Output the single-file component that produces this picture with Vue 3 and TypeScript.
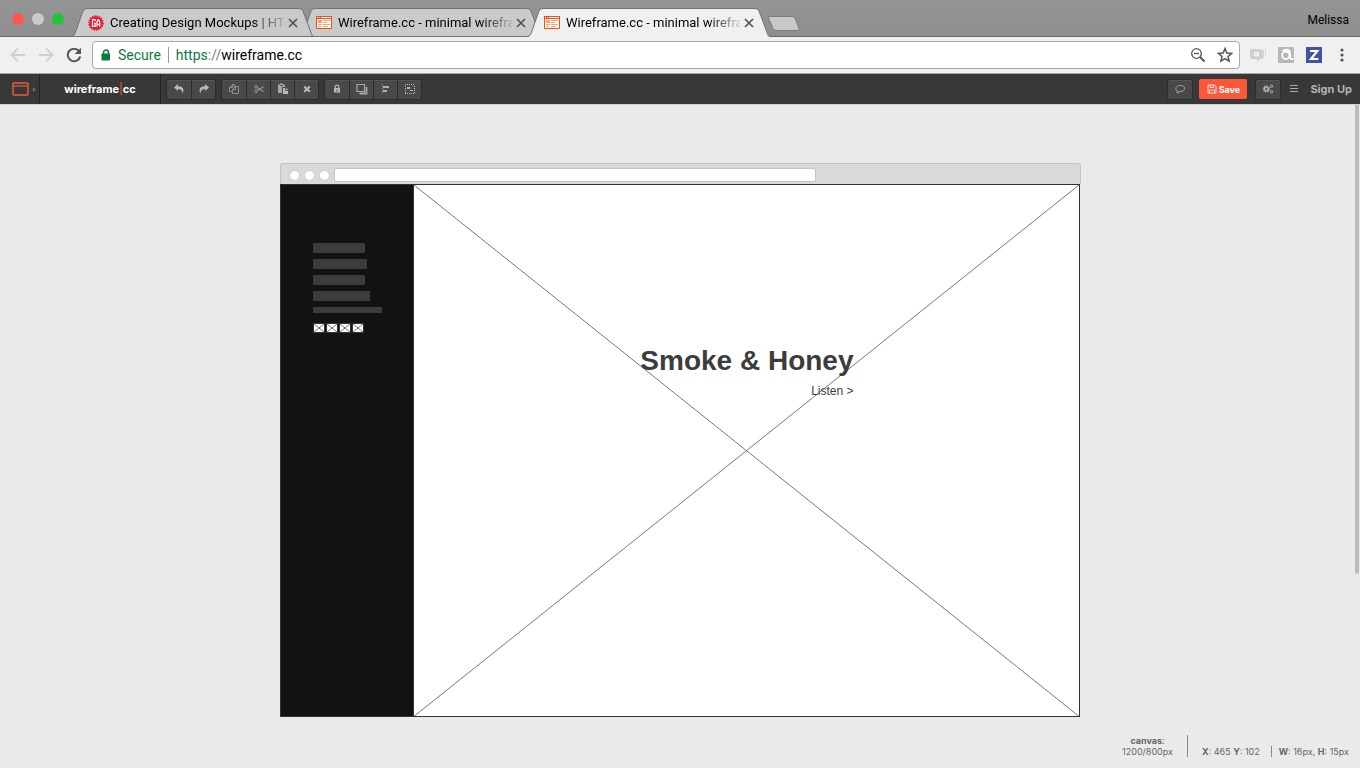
<script setup lang="ts">
import { ref } from 'vue'

interface Tab {
  id: number
  title: string
  icon: 'ga' | 'wire'
}

const tabs: Tab[] = [
  { id: 1, title: 'Creating Design Mockups | HTML', icon: 'ga' },
  { id: 2, title: 'Wireframe.cc - minimal wireframing', icon: 'wire' },
  { id: 3, title: 'Wireframe.cc - minimal wireframing', icon: 'wire' },
]
const active = ref(3)
const address = ref('wireframe.cc')
const groups: string[][] = [
  ['Undo', 'Redo'],
  ['Copy', 'Cut', 'Paste', 'Delete'],
  ['Lock', 'Order', 'Align', 'Group'],
]
const navBars = ['bar-a', 'bar-b', 'bar-a', 'bar-c', 'bar-d']
</script>

<template>
  <div class="window">
    <header class="tabstrip">
      <div class="lights">
        <button class="light red" aria-label="Close window"></button>
        <button class="light grey" aria-label="Minimise window"></button>
        <button class="light green" aria-label="Zoom window"></button>
      </div>
      <nav class="tabs" aria-label="Tabs">
        <div v-for="tab in tabs" :key="tab.id" class="tab" :class="['tab-' + tab.id, { active: tab.id === active }]">
          <svg class="tab-shape" viewBox="0 0 242 29" preserveAspectRatio="none" aria-hidden="true">
            <path class="fill" d="M0 29 L2 27.5 L11 3 Q12 .5 15 .5 H227 Q230 .5 231 3 L240 27 L242 29Z" />
            <path class="edge" d="M0 28.5 Q2 28 3 25.500 L11 3 Q12 .5 15 .5 H227 Q230 .5 231 3 L239.500 26 Q240 28.500 242 28.500" />
            <path v-if="tab.id !== active" class="edge" d="M0 28.500H242" />
          </svg>
          <svg v-if="tab.icon === 'ga'" class="favicon" viewBox="0 0 16 16" aria-hidden="true">
            <circle cx="8" cy="8" r="6.700" fill="#ee1436" />
            <circle cx="8" cy="8" r="7" fill="none" stroke="#ee1436" stroke-width="1.600" stroke-dasharray="1.400 1" />
            <path d="M7.200 6.300V4.700H4.500V11.300H7.200V8.300H6M9 11.800V7L10 4.700H10.500L11.700 7V11.800M9 9.300H11.700" fill="none" stroke="#fff" stroke-width="1.200" />
          </svg>
          <svg v-else class="favicon" viewBox="0 0 16 16" aria-hidden="true">
            <path d="M.5 1.500H15.500V13.500H.5Z" fill="#fff" />
            <path d="M0 1H16V4H0Z" fill="#ff4a0c" />
            <path d="M.5 1.500V13.500H15.500V1.500" fill="none" stroke="#ff4a0c" />
            <path d="M1 2.500H2M3 2.500H4M5 2.500H15" stroke="#fff" />
            <path d="M2 5H6V8H2ZM7 5H14V6H7ZM7 7H11V8H7ZM2 9H6V10H2ZM7 9H14V10H7ZM2 11H5V12H2ZM7 11H12V12H7Z" fill="#ff9c72" />
          </svg>
          <button class="tab-title" @click="active = tab.id">{{ tab.title }}</button>
          <button class="tab-close" :aria-label="'Close ' + tab.title">
            <svg viewBox="0 0 10 10"><path d="M1 1 9 9M9 1 1 9" fill="none" stroke="#525252" stroke-width="1.700" /></svg>
          </button>
        </div>
      </nav>
      <button class="new-tab" aria-label="New tab">
        <svg viewBox="0 0 34 18"><path d="M3 1.500H25Q27 1.500 28 3L32 13.500Q32.500 15.500 31 15.500H9Q7 15.500 6 13.500L1.500 3Q1 1.500 3 1.500Z" fill="#c9c9c9" stroke="#7b7b7b" /></svg>
      </button>
      <span class="profile">Melissa</span>
    </header>

    <div class="navbar">
      <button class="nav" aria-label="Back"><svg viewBox="0 0 16 16"><path d="M15 8H2M8 1.500 1.500 8 8 14.500" fill="none" stroke="#cfcfcf" stroke-width="1.800" /></svg></button>
      <button class="nav" aria-label="Forward"><svg viewBox="0 0 16 16"><path d="M1 8H14M8 1.500 14.500 8 8 14.500" fill="none" stroke="#cfcfcf" stroke-width="1.800" /></svg></button>
      <button class="nav" aria-label="Reload"><svg viewBox="0 0 16 16"><path d="M13 4A6.300 6.300 0 1 0 14.200 9.500" fill="none" stroke="#555" stroke-width="2" /><path d="M15 .7V7H8.700Z" fill="#555" /></svg></button>
      <div class="omnibox">
        <svg class="padlock" viewBox="0 0 10 12" aria-hidden="true"><path d="M2.500 5V3.500A2.500 2.500 0 0 1 7.500 3.500V5" fill="none" stroke="#0b7a3b" stroke-width="1.500" /><rect x=".5" y="4.500" width="8.500" height="7" rx=".8" fill="#0b7a3b" /></svg>
        <span class="secure">Secure</span>
        <span class="divider"></span>
        <label class="scheme" for="address">https<i>://</i></label>
        <input id="address" v-model="address" class="address" type="text" />
        <button class="inner" aria-label="Zoom out"><svg viewBox="0 0 16 16"><circle cx="6.500" cy="6.500" r="4.800" fill="none" stroke="#555" stroke-width="1.300" /><path d="M4 6.500H9" stroke="#555" stroke-width="1.300" /><path d="M10 10 14.500 14.500" stroke="#555" stroke-width="2" /></svg></button>
        <button class="inner" aria-label="Bookmark"><svg viewBox="0 0 16 16"><path d="M8 1.500 9.800 6 14.600 6.400 11 9.500 12.100 14.200 8 11.700 3.900 14.200 5 9.500 1.400 6.400 6.200 6Z" fill="none" stroke="#555" stroke-width="1.500" /></svg></button>
      </div>
      <button class="ext" aria-label="Chat extension">
        <svg viewBox="0 0 16 16"><path d="M2 2H11Q13 2 13 4V10Q13 12 11 12H9.500L8 14.500 6.500 12H2Q0 12 0 10V4Q0 2 2 2Z" fill="#cfcfcf" /><path d="M13.500 3V11M15.500 2V9" stroke="#d8d8d8" /><circle cx="6" cy="7.300" r="1.700" fill="none" stroke="#fff" stroke-width="1.200" /><path d="M8 5.200V9.500" stroke="#fff" stroke-width="1.200" /></svg>
      </button>
      <button class="ext" aria-label="Mail extension">
        <svg viewBox="0 0 16 16"><rect width="16" height="16" rx="1" fill="#b7b7b7" /><path d="M4.500 4Q7 2 10 2.800Q12 3.500 12 6V10.500Q12.300 12.300 15.500 12" fill="none" stroke="#fff" stroke-width="1.800" /><ellipse cx="7.800" cy="8.300" rx="3.700" ry="3.800" fill="none" stroke="#fff" stroke-width="1.800" /></svg>
      </button>
      <button class="ext" aria-label="Z extension">
        <svg viewBox="0 0 16 16"><rect width="16" height="16" fill="#4353a4" /><path d="M4 4H11.300L5 12H12.300" fill="none" stroke="#fff" stroke-width="2.200" /></svg>
      </button>
      <button class="dots" aria-label="Menu"><svg viewBox="0 0 4 16"><circle cx="2" cy="3" r="1.600" /><circle cx="2" cy="8" r="1.600" /><circle cx="2" cy="13" r="1.600" /></svg></button>
    </div>

    <div class="appbar">
      <button class="device" aria-label="Page type">
        <svg viewBox="0 0 26 14"><rect x="1" y="1" width="15" height="12" rx="1" fill="none" stroke="#ef5a3e" stroke-width="1.400" /><path d="M1 4H16" stroke="#ef5a3e" stroke-width="1.200" /><path d="M21 5 23.500 7.500 21 10Z" fill="#777" /></svg>
      </button>
      <a class="logo" href="#">wireframe<i>|</i>cc</a>
      <div class="tools">
        <div v-for="group in groups" :key="group[0]" class="group">
          <button v-for="tool in group" :key="tool" class="tool" :aria-label="tool">
            <svg viewBox="0 0 12 12">
              <path v-if="tool === 'Undo'" d="M1 4.500 5 1V3.200Q10.500 3.200 10.500 7.500Q10.500 9 9.500 10.500Q9.500 6 5 6V8Z" fill="#b9b9b9" />
              <path v-else-if="tool === 'Redo'" d="M11 4.500 7 1V3.200Q1.500 3.200 1.500 7.500Q1.500 9 2.500 10.500Q2.500 6 7 6V8Z" fill="#b9b9b9" />
              <path v-else-if="tool === 'Copy'" d="M4 8.500H1.500V4.500L4.500 1.500H6.500V3.500M1.500 4.500H4.500V1.500M4.500 6.500 7.500 3.500H10.500V10.500H4.500ZM4.500 6.500H7.500V3.500" fill="none" stroke="#959595" stroke-width=".9" />
              <g v-else-if="tool === 'Cut'" fill="none" stroke="#959595"><circle cx="3" cy="3.800" r="1.300" /><circle cx="3" cy="8.400" r="1.300" /><path d="M4 4.500 10.500 8.500M4 7.700 10.500 3.700" stroke-width="1.200" /></g>
              <g v-else-if="tool === 'Paste'"><path d="M1 1.500H3V.5H6V1.500H8V4H5V10H1Z" fill="#a5a5a5" /><path d="M6 5H9L11 7V11H6Z" fill="#b9b9b9" /><path d="M8.500 5V7.500H11M3 2.500H6" fill="none" stroke="#444" stroke-width=".8" /></g>
              <path v-else-if="tool === 'Delete'" d="M3.200 3.500 8.800 8.700M8.800 3.500 3.200 8.700" fill="none" stroke="#b9b9b9" stroke-width="2.200" />
              <g v-else-if="tool === 'Lock'"><path d="M4.200 5.500V4A1.800 1.800 0 0 1 7.800 4V5.500" fill="none" stroke="#b9b9b9" stroke-width="1.200" /><rect x="3" y="5" width="6" height="4.500" fill="#b9b9b9" /><path d="M6 6.500V8.500" stroke="#444" /></g>
              <g v-else-if="tool === 'Order'" fill="none" stroke="#a9a9a9"><path d="M1 1.500H8.500V8.500H1Z" stroke-width="1.200" /><path d="M10.500 4V10.500H3.500" stroke-width="1.800" /></g>
              <g v-else-if="tool === 'Align'"><path d="M2.500 1V11" stroke="#999" stroke-dasharray="1 1" /><path d="M3 3H9V5H3ZM3 7H7V9H3Z" fill="#b0b0b0" /></g>
              <g v-else><path d="M1 1.500H11M1 10.500H11M1.500 3V10M10.500 3V10" fill="none" stroke="#bbb" stroke-dasharray="1 1" /><path d="M3 4H6V6H3ZM6 7H9V8H6Z" fill="#b5b5b5" /></g>
            </svg>
          </button>
        </div>
      </div>
      <div class="actions">
        <div class="group">
          <button class="tool" aria-label="Comments"><svg viewBox="0 0 12 12"><path d="M6.500 2.500C9.500 2.500 10.700 4 10.700 5.500S9 8.500 6 8.500L3 10 3.500 8C.5 7 1.500 2.500 6.500 2.500Z" fill="none" stroke="#aaa" stroke-width=".9" /></svg></button>
        </div>
        <button class="save">
          <svg viewBox="0 0 10 10" aria-hidden="true"><path d="M1 1H7.500L9 2.500V9H1ZM3 1V3.500H6.500V1M2.500 9V6H7.500V9" fill="none" stroke="#fff" stroke-width=".8" /></svg>Save
        </button>
        <div class="group">
          <button class="tool" aria-label="Settings"><svg viewBox="0 0 12 12" fill="none" stroke="#b5b5b5"><circle cx="4.300" cy="6" r="2" stroke-width="1.700" /><circle cx="4.300" cy="6" r="3.200" stroke-dasharray="1.300 1.200" /><circle cx="9.500" cy="3.300" r="1.200" /><circle cx="9.500" cy="8.700" r="1.200" /></svg></button>
        </div>
        <button class="list" aria-label="Menu"><svg viewBox="0 0 10 10"><path d="M1 1.500H9M1 4.500H9M1 7.500H9" stroke="#aaa" /></svg></button>
        <a class="signup" href="#">Sign Up</a>
      </div>
    </div>

    <main class="workspace">
      <div class="mock">
        <div class="mock-bar">
          <span class="dot"></span><span class="dot"></span><span class="dot"></span>
          <span class="mock-url"></span>
        </div>
        <div class="canvas">
          <aside class="side">
            <div v-for="(bar, i) in navBars" :key="i" class="bar" :class="bar"></div>
            <div class="socials">
              <svg v-for="n in 4" :key="n" viewBox="0 0 12 10"><rect width="12" height="10" fill="#333" /><rect x="1" y="1" width="10" height="8" fill="#fff" /><path d="M1 1 11 9M11 1 1 9" stroke="#777" /></svg>
            </div>
          </aside>
          <section class="hero">
            <svg class="cross" viewBox="0 0 100 100" preserveAspectRatio="none" aria-hidden="true"><path d="M0 0 100 100M100 0 0 100" /></svg>
            <div class="caption">
              <h1>Smoke &amp; Honey</h1>
              <a href="#">Listen &gt;</a>
            </div>
          </section>
        </div>
      </div>
      <footer class="status">
        <div class="size"><b>canvas</b>:<br />1200/800px</div>
        <div class="pos"><b>X</b>: 465 <b>Y</b>: 102</div>
        <div class="dims"><b>W</b>: 16px, <b>H</b>: 15px</div>
      </footer>
      <div class="scroll"></div>
    </main>
  </div>
</template>

<style>
body {
  margin: 0;
  background: #eaeaea;
}
</style>

<style scoped>
* {
  box-sizing: border-box;
}
.window {
  display: flex;
  flex-direction: column;
  min-height: 100vh;
  font-family: Roboto, "Liberation Sans", sans-serif;
  color: #000;
}
button {
  border: 0;
  padding: 0;
  background: none;
  font: inherit;
  color: inherit;
}
a {
  color: inherit;
  text-decoration: none;
}
svg {
  display: block;
}
.tabstrip {
  display: flex;
  align-items: flex-end;
  height: 37px;
  background: linear-gradient(#959595, #8e8e8e);
  box-shadow: inset 0 -1px #696969;
}
.lights {
  display: flex;
  gap: 8px;
  width: 72px;
  padding: 0 0 12px 12px;
}
.light {
  width: 12px;
  height: 12px;
  border-radius: 50%;
}
.red { background: #fc5650; }
.grey { background: #cbcbcb; }
.green { background: #20c43a; }
.tabs {
  display: flex;
}
.tab {
  position: relative;
  display: flex;
  align-items: center;
  width: 242px;
  height: 29px;
  padding: 0 16px;
  isolation: isolate;
}
.tab + .tab {
  margin-left: -14px;
}
.tab-1 { z-index: 3; }
.tab-2 { z-index: 2; }
.tab.active { z-index: 4; }
.tab-shape {
  position: absolute;
  inset: 0;
  z-index: -1;
  width: 100%;
  height: 100%;
}
.fill { fill: #cacaca; }
.active .fill { fill: #f0f0f0; }
.edge {
  fill: none;
  stroke: #717171;
}
.favicon {
  flex: none;
  width: 16px;
  height: 16px;
}
.tab-title {
  width: 174px;
  margin: 0 4px 0 6px;
  overflow: hidden;
  font-size: 13px;
  line-height: 18px;
  text-align: left;
  white-space: nowrap;
  mask-image: linear-gradient(to right, #000 142px, transparent 178px);
}
.tab-close {
  flex: none;
}
.tab-close svg {
  width: 10px;
  height: 10px;
}
.new-tab {
  margin: 0 0 4px -3px;
}
.new-tab svg {
  width: 34px;
  height: 18px;
}
.profile {
  margin: 0 11px 8px auto;
  font-size: 12px;
  line-height: 18px;
}
.navbar {
  display: flex;
  align-items: center;
  height: 37px;
  padding: 0 16px 0 10px;
  background: #f0f0f0;
  border-bottom: 1px solid #a9a9a9;
}
.nav {
  margin-right: 12px;
}
.nav + .nav + .nav {
  margin-right: 10px;
}
.nav svg,
.inner svg,
.ext svg {
  width: 16px;
  height: 16px;
}
.omnibox {
  display: flex;
  flex: 1;
  align-items: center;
  height: 28px;
  margin-right: 10px;
  padding: 0 6px 0 8px;
  background: #fff;
  border: 1px solid #a9a9a9;
  border-radius: 4px;
  font-size: 14px;
}
.padlock {
  width: 10px;
  height: 12px;
}
.secure {
  margin-left: 7px;
  color: #0b7a3b;
}
.divider {
  width: 1px;
  height: 16px;
  margin: 0 7px;
  background: #999;
}
.scheme {
  color: #0b7a3b;
}
.scheme i {
  font-style: normal;
  color: #808080;
}
.address {
  flex: 1;
  min-width: 0;
  padding: 0;
  border: 0;
  outline: 0;
  background: none;
  font: inherit;
  color: #000;
}
.inner {
  margin-left: 11px;
}
.ext {
  margin-right: 12px;
}
.dots {
  margin-left: 6px;
}
.dots svg {
  width: 4px;
  height: 16px;
  fill: #555;
}
.appbar {
  display: flex;
  height: 30px;
  background: #383838;
  font-family: Inter, sans-serif;
  font-size: 11px;
  font-weight: 700;
}
.device {
  width: 40px;
  padding-left: 12px;
  border-right: 1px solid #222;
}
.device svg {
  width: 26px;
  height: 14px;
}
.logo {
  display: flex;
  align-items: center;
  justify-content: center;
  width: 121px;
  border-right: 1px solid #222;
  color: #fff;
}
.logo i {
  color: #ef5a3e;
  font-style: normal;
  font-weight: 400;
}
.tools,
.actions {
  display: flex;
  align-items: center;
  gap: 7px;
  padding: 0 6px;
}
.actions {
  margin-left: auto;
  padding-right: 8px;
}
.group {
  display: flex;
  background: #494949;
  border-radius: 2px;
  box-shadow: 0 0 0 1px #2c2c2c, inset 0 1px #555;
}
.tool {
  display: flex;
  align-items: center;
  justify-content: center;
  width: 24px;
  height: 19px;
}
.tool + .tool {
  border-left: 1px solid #2c2c2c;
}
.tool svg {
  flex: none;
  width: 12px;
  height: 12px;
}
.save {
  display: flex;
  align-items: center;
  justify-content: center;
  gap: 2px;
  width: 48px;
  height: 20px;
  border-radius: 2px;
  background: #fd5739;
  color: #fff;
  font-size: 9px;
}
.save svg {
  width: 10px;
  height: 10px;
}
.actions .group:nth-child(3) {
  margin-left: 2px;
}
.list {
  margin: 0 4px 0 2px;
}
.list svg {
  width: 10px;
  height: 10px;
}
.signup {
  color: #b4b4b4;
}
.workspace {
  position: relative;
  display: flex;
  flex: 1;
  flex-direction: column;
  padding-top: 58px;
  background: #eaeaea;
  border-top: 1px solid #d2d2d2;
}
.mock {
  width: 100%;
  max-width: 801px;
  margin: 0 auto;
}
.mock-bar {
  display: flex;
  align-items: center;
  height: 21px;
  padding: 2px 8px 0;
  gap: 4px;
  background: #d9d9d9;
  border: 1px solid #c4c4c4;
  border-bottom: 0;
  border-radius: 3px 3px 0 0;
}
.dot {
  width: 11px;
  height: 11px;
  border: 1px solid #ccc;
  border-radius: 50%;
  background: #fff;
}
.mock-url {
  flex: 0 1 482px;
  height: 14px;
  border: 1px solid #c4c4c4;
  border-radius: 2px;
  background: #fff;
}
.canvas {
  display: flex;
  aspect-ratio: 3 / 2;
  width: calc(100% - 1px);
  border: 1px solid #333;
  background: #fff;
}
.side {
  flex: none;
  width: 132px;
  padding: 58px 0 0 32px;
  background: #121212;
}
.bar {
  height: 10px;
  margin-bottom: 6px;
  background: #3c3c3c;
}
.bar-a { width: 52px; }
.bar-b { width: 54px; }
.bar-c { width: 57px; }
.bar-d {
  width: 69px;
  height: 6px;
  margin-bottom: 10px;
}
.socials {
  display: flex;
  justify-content: space-between;
  width: 52px;
}
.socials svg {
  width: 12px;
  height: 10px;
}
.hero {
  position: relative;
  flex: 1;
  border-left: 1px solid #333;
}
.cross {
  position: absolute;
  inset: 0;
  width: 100%;
  height: 100%;
}
.cross path {
  fill: none;
  stroke: #777;
  stroke-width: 1px;
  vector-effect: non-scaling-stroke;
}
.caption {
  position: absolute;
  top: 160px;
  right: 225px;
  color: #3c3c3c;
  font-family: "Liberation Sans", Arial, sans-serif;
  font-size: 12px;
  line-height: 16px;
  text-align: right;
}
.caption h1 {
  margin: 0 0 6px;
  font-size: 28px;
  line-height: 32px;
  white-space: nowrap;
}
.status {
  display: flex;
  align-items: flex-end;
  justify-content: flex-end;
  margin-top: auto;
  padding: 0 11px 11px 0;
  color: #666;
  font-family: Inter, sans-serif;
  font-size: 9px;
  line-height: 11px;
}
.size {
  padding-right: 14px;
  border-right: 1px solid #888;
  text-align: center;
}
.pos {
  padding: 0 11px 0 14px;
  border-right: 1px solid #888;
}
.dims {
  padding-left: 7px;
}
.scroll {
  position: absolute;
  top: 0;
  right: 1px;
  width: 4px;
  height: 469px;
  border-radius: 0 0 2px 2px;
  background: #bcbcbc;
}
</style>
